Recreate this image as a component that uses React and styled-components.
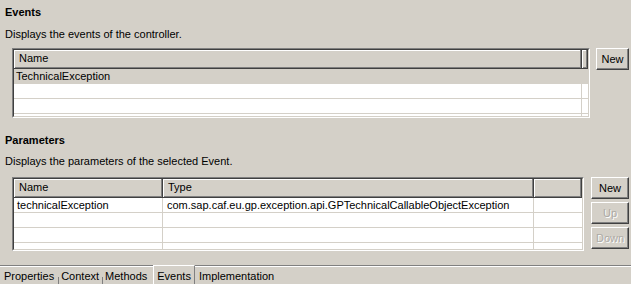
import styled, { createGlobalStyle } from "styled-components";

const Global = createGlobalStyle`
body{
  margin:0;
  background:#d4d0c8;
  font-family:"Liberation Sans", Arial, sans-serif;
  font-size:11px;
  color:#000;
}
`

const Page = styled.div`
width:631px;
height:284px;
display:flex;
flex-direction:column;
overflow:hidden;
`

const Section = styled.div`
padding-left:5px;
height:${p => p.h}px;
display:flex;
flex-direction:column;
`

const Title = styled.div`
font-weight:bold;
line-height:13px;
margin-top:6px;
`

const Desc = styled.div`
line-height:13px;
margin-top:${p => p.gap}px;
`

const Body = styled.div`
display:flex;
margin-top:${p => p.gap}px;
padding-left:7px;
`

const Table = styled.div`
width:${p => p.w}px;
height:${p => p.h}px;
border:1px solid;
border-color:#808080 #fff #fff #808080;
box-sizing:border-box;
overflow:hidden;
`

const Inner = styled.div`
height:100%;
border:1px solid;
border-color:#404040 #d4d0c8 #d4d0c8 #404040;
background:#fff;
box-sizing:border-box;
overflow:hidden;
`

const HeadRow = styled.div`
display:flex;
height:18px;
background:#d4d0c8;
border-bottom:1px solid #404040;
box-shadow:inset 0 -1px 0 #808080;
`

const HeadCell = styled.div`
width:${p => p.w}px;
flex:${p => p.w ? "none" : 1};
padding-left:5px;
line-height:17px;
box-sizing:border-box;
border-right:1px solid #404040;
box-shadow:inset -1px 0 0 #808080, inset 1px 1px 0 #fff;
`

const Row = styled.div`
display:flex;
height:14px;
border-bottom:1px solid #d4d0c8;
background:${p => p.sel ? "#d4d0c8" : "#fff"};
`

const Cell = styled.div`
width:${p => p.w}px;
flex:${p => p.w ? "none" : 1};
padding-left:${p => p.pl ?? 2}px;
line-height:14px;
box-sizing:border-box;
border-right:${p => p.last ? "none" : "1px solid #d4d0c8"};
white-space:nowrap;
`

const Buttons = styled.div`
display:flex;
flex-direction:column;
gap:3px;
margin-left:${p => p.gap}px;
`

const Button = styled.button`
width:${p => p.w}px;
height:22px;
padding:0;
font-family:inherit;
font-size:11px;
background:#d4d0c8;
color:${p => p.disabled ? "#acaaa5" : "#000"};
text-shadow:${p => p.disabled ? "1px 1px 0 #fff" : "none"};
border:1px solid;
border-color:#fff #404040 #404040 #fff;
box-shadow:inset -1px -1px 0 #808080;
`

const TabBar = styled.div`
margin-top:auto;
height:18px;
border-top:1px solid #808080;
box-shadow:inset 0 1px 0 #fff;
display:flex;
align-items:stretch;
padding-left:2px;
`

const Tab = styled.div`
padding:2px ${p => p.pr}px 0 2px;
line-height:16px;
position:relative;
${p => p.active && `
  background:#d4d0c8;
  border-left:1px solid #fff;
  border-top:1px solid #fff;
  border-right:1px solid #808080;
  padding:1px 3px 0;
  margin:-1px 2px 0 4px;
  line-height:18px;
`}
${p => p.sep && `
  &:after{
    content:"";
    position:absolute;
    right:0;
    top:11px;
    height:8px;
    border-right:1px solid #808080;
  }
`}
`

function EventsTable() {
  return (
    <Table w={578} h={70}>
      <Inner>
        <HeadRow>
          <HeadCell w={568}>Name</HeadCell>
          <HeadCell />
        </HeadRow>
        <Row sel><Cell w={568}>TechnicalException</Cell><Cell last /></Row>
        <Row><Cell w={568} /><Cell last /></Row>
        <Row><Cell w={568} /><Cell last /></Row>
        <Row><Cell w={568} /><Cell last /></Row>
      </Inner>
    </Table>
  )
}

function ParamsTable() {
  return (
    <Table w={572} h={74}>
      <Inner>
        <HeadRow>
          <HeadCell w={149}>Name</HeadCell>
          <HeadCell w={371}>Type</HeadCell>
          <HeadCell />
        </HeadRow>
        <Row><Cell w={149} pl={3}>technicalException</Cell><Cell w={371} pl={4}>com.sap.caf.eu.gp.exception.api.GPTechnicalCallableObjectException</Cell><Cell last /></Row>
        <Row><Cell w={149} /><Cell w={371} /><Cell last /></Row>
        <Row><Cell w={149} /><Cell w={371} /><Cell last /></Row>
        <Row><Cell w={149} /><Cell w={371} /><Cell last /></Row>
      </Inner>
    </Table>
  )
}

export default function App() {
  return (
    <>
      <Global />
      <Page>
        <Section h={128}>
          <Title>Events</Title>
          <Desc gap={9}>Displays the events of the controller.</Desc>
          <Body gap={7}>
            <EventsTable />
            <Buttons gap={6}>
              <Button w={33}>New</Button>
            </Buttons>
          </Body>
        </Section>
        <Section h={130}>
          <Title>Parameters</Title>
          <Desc gap={8}>Displays the parameters of the selected Event.</Desc>
          <Body gap={9}>
            <ParamsTable />
            <Buttons gap={7}>
              <Button w={38}>New</Button>
              <Button w={38} disabled>Up</Button>
              <Button w={38} disabled>Down</Button>
            </Buttons>
          </Body>
        </Section>
        <TabBar>
          <Tab sep pr={5}>Properties</Tab>
          <Tab sep pr={4}>Context</Tab>
          <Tab pr={2}>Methods</Tab>
          <Tab active>Events</Tab>
          <Tab pr={2}>Implementation</Tab>
        </TabBar>
      </Page>
    </>
  )
}
